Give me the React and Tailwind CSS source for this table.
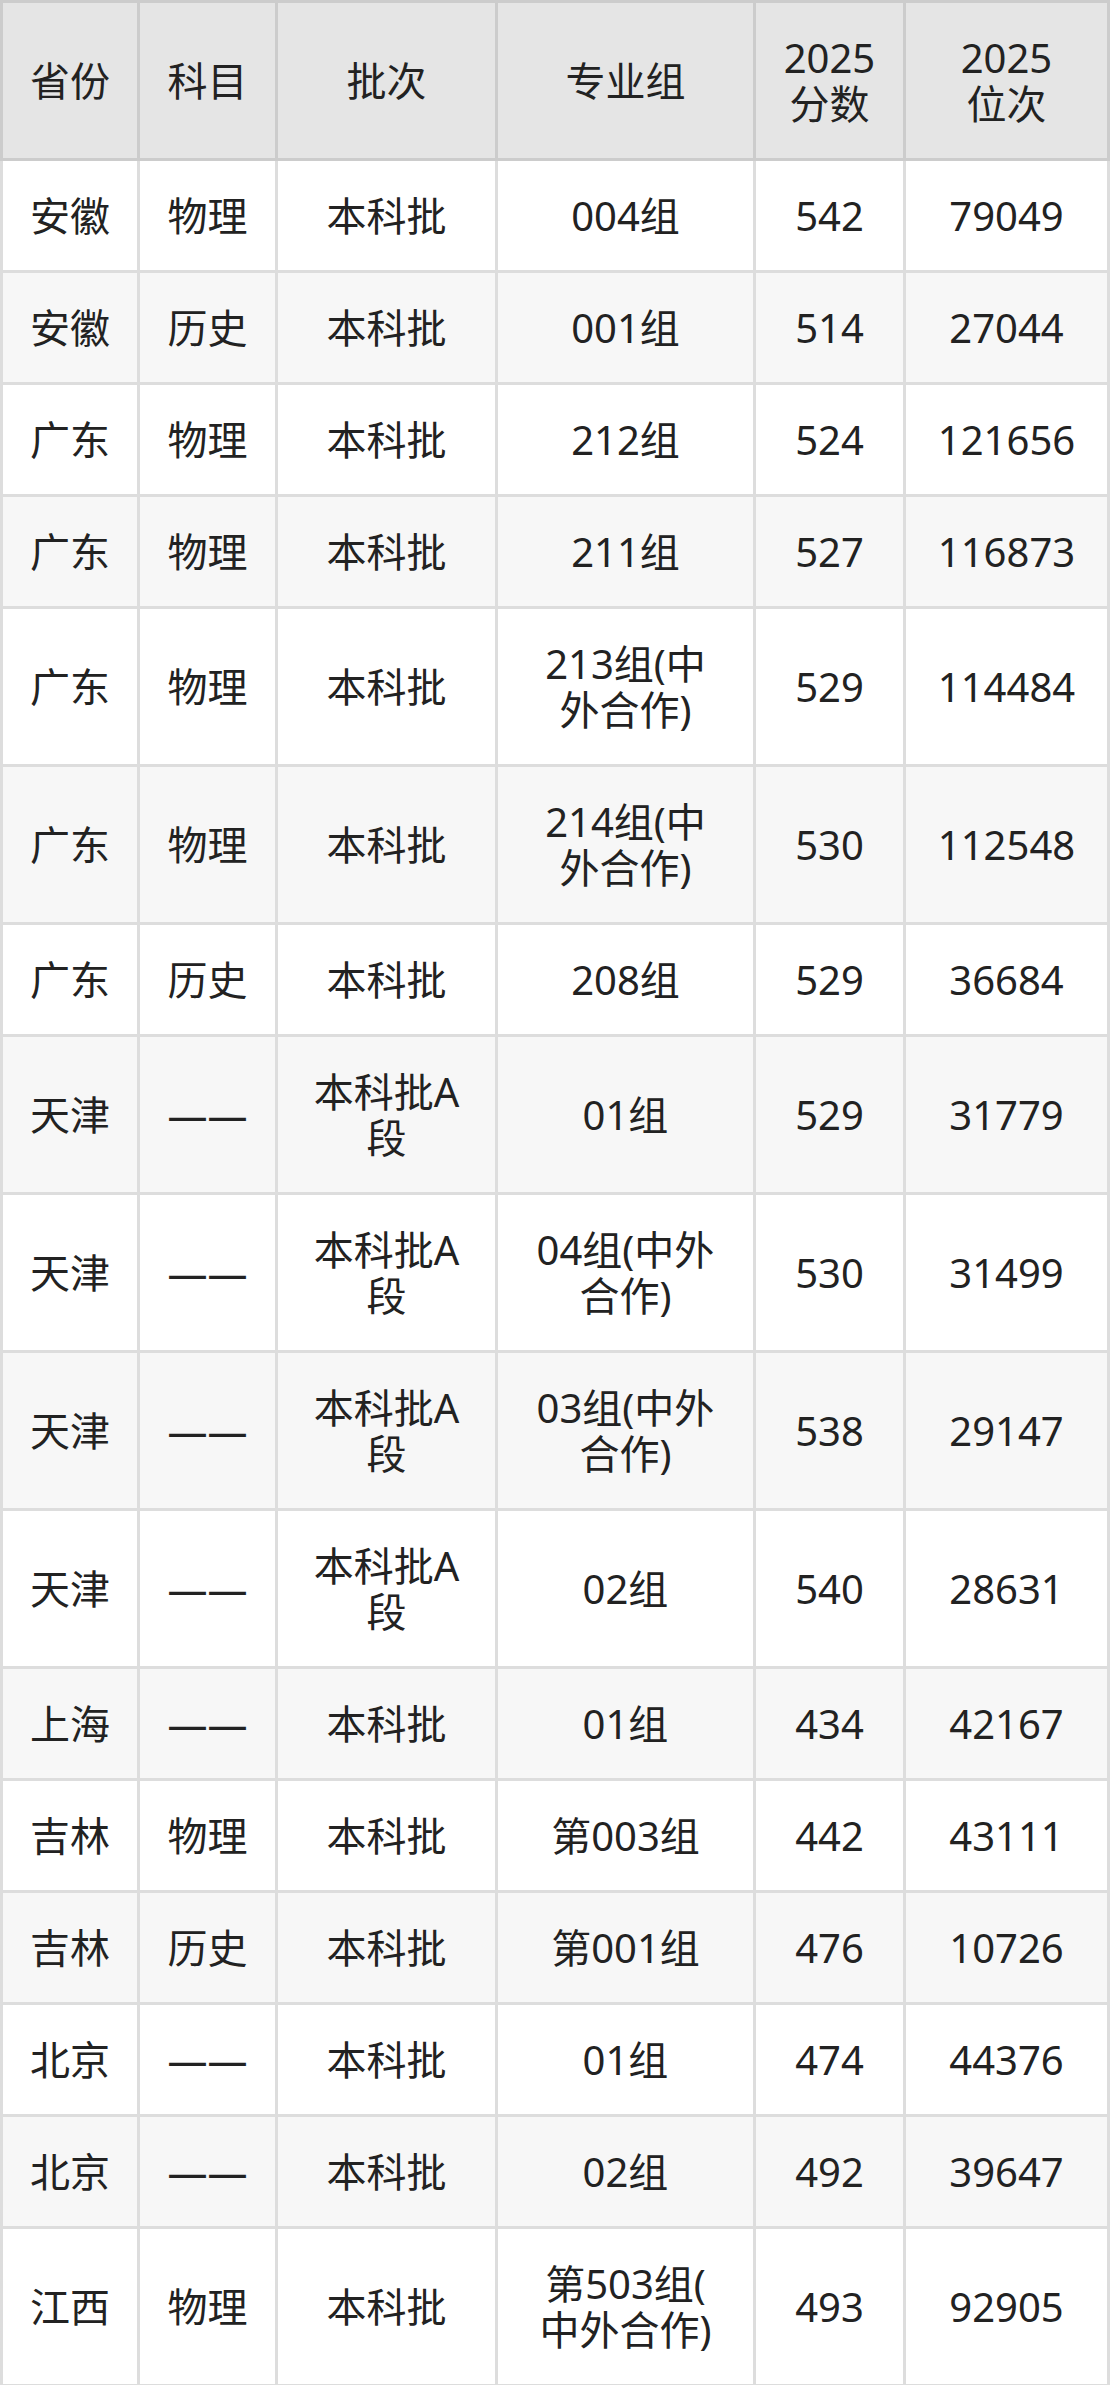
const HEAD = ['省份', '科目', '批次', '专业组', ['2025', '分数'], ['2025', '位次']]

const ROWS = [
  ['安徽', '物理', '本科批', '004组', '542', '79049'],
  ['安徽', '历史', '本科批', '001组', '514', '27044'],
  ['广东', '物理', '本科批', '212组', '524', '121656'],
  ['广东', '物理', '本科批', '211组', '527', '116873'],
  ['广东', '物理', '本科批', ['213组(中', '外合作)'], '529', '114484'],
  ['广东', '物理', '本科批', ['214组(中', '外合作)'], '530', '112548'],
  ['广东', '历史', '本科批', '208组', '529', '36684'],
  ['天津', '——', ['本科批A', '段'], '01组', '529', '31779'],
  ['天津', '——', ['本科批A', '段'], ['04组(中外', '合作)'], '530', '31499'],
  ['天津', '——', ['本科批A', '段'], ['03组(中外', '合作)'], '538', '29147'],
  ['天津', '——', ['本科批A', '段'], '02组', '540', '28631'],
  ['上海', '——', '本科批', '01组', '434', '42167'],
  ['吉林', '物理', '本科批', '第003组', '442', '43111'],
  ['吉林', '历史', '本科批', '第001组', '476', '10726'],
  ['北京', '——', '本科批', '01组', '474', '44376'],
  ['北京', '——', '本科批', '02组', '492', '39647'],
  ['江西', '物理', '本科批', ['第503组(', '中外合作)'], '493', '92905'],
]

function Lines({ value }) {
  if (!Array.isArray(value)) return value
  return value.map((l, i) => <div key={i}>{l}</div>)
}

export default function App() {
  return (
    <div
      className="w-[1110px] bg-white text-[40px] leading-[46px] text-[#222]"
      style={{ fontFamily: '"Noto Sans", "Noto Sans CJK SC", sans-serif' }}
    >
      <div className="grid grid-cols-[140px_138px_220px_258px_150px_204px]">
        {HEAD.map((h, i) => (
          <div
            key={i}
            className={`h-[161px] flex flex-col items-center justify-center text-center bg-[#e5e5e5] border-t-[3px] border-r-[3px] border-b-[3px] border-[#cccccc] ${i === 0 ? 'border-l-[3px]' : ''}`}
          >
            <Lines value={h} />
          </div>
        ))}
        {ROWS.map((row, r) =>
          row.map((c, i) => {
            const tall = row.some(x => Array.isArray(x))
            return (
              <div
                key={r + '-' + i}
                className={`${tall ? 'h-[158px]' : 'h-[112px]'} flex flex-col items-center justify-center text-center border-r-[3px] border-b-[3px] border-[#dddddd] ${i === 0 ? 'border-l-[3px]' : ''} ${r % 2 === 1 ? 'bg-[#f7f7f7]' : 'bg-white'}`}
              >
                <Lines value={c} />
              </div>
            )
          })
        )}
      </div>
    </div>
  )
}
